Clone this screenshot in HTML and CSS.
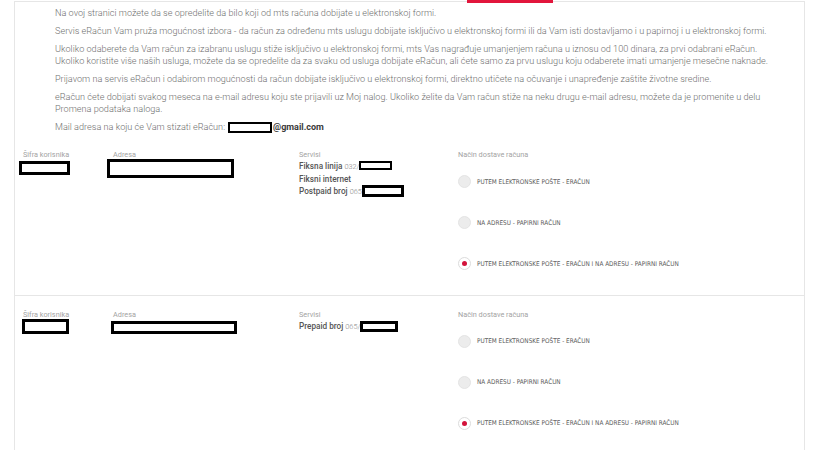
FILE: index.html
```html
<!DOCTYPE html>
<html lang="sr">
<head>
<meta charset="utf-8">
<title>eRačun</title>
<link rel="stylesheet" href="styles.css">
</head>
<body>
<div class="panel">
  <div class="tab-indicator"></div>
  <div class="intro">
    <p>Na ovoj stranici možete da se opredelite da bilo koji od mts računa dobijate u elektronskoj formi.</p>
    <p>Servis eRačun Vam pruža mogućnost izbora - da račun za određenu mts uslugu dobijate isključivo u elektronskoj formi ili da Vam isti dostavljamo i u papirnoj i u elektronskoj formi.</p>
    <p>Ukoliko odaberete da Vam račun za izabranu uslugu stiže isključivo u elektronskoj formi, mts Vas nagrađuje umanjenjem računa u iznosu od 100 dinara, za prvi odabrani eRačun.<br>Ukoliko koristite više naših usluga, možete da se opredelite da za svaku od usluga dobijate eRačun, ali ćete samo za prvu uslugu koju odaberete imati umanjenje mesečne naknade.</p>
    <p>Prijavom na servis eRačun i odabirom mogućnosti da račun dobijate isključivo u elektronskoj formi, direktno utičete na očuvanje i unapređenje zaštite životne sredine.</p>
    <p>eRačun ćete dobijati svakog meseca na e-mail adresu koju ste prijavili uz Moj nalog. Ukoliko želite da Vam račun stiže na neku drugu e-mail adresu, možete da je promenite u delu<br>Promena podataka naloga.</p>
    <p class="mail">Mail adresa na koju će Vam stizati eRačun:<span class="redact r-mail"></span><b>@gmail.com</b></p>
  </div>

  <div class="account">
    <div class="col">
      <div class="label">Šifra korisnika</div>
      <span class="redact r-id1"></span>
    </div>
    <div class="col">
      <div class="label">Adresa</div>
      <span class="redact r-addr1"></span>
    </div>
    <div class="col">
      <div class="label">Servisi</div>
      <div class="svc">Fiksna linija <small>032/</small><span class="redact r-s1"></span></div>
      <div class="svc">Fiksni internet</div>
      <div class="svc">Postpaid broj <small>065</small><span class="redact r-s2"></span></div>
    </div>
    <div class="col">
      <div class="label">Način dostave računa</div>
      <ul class="radios">
        <li><span class="radio"></span>PUTEM ELEKTRONSKE POŠTE - ERAČUN</li>
        <li><span class="radio"></span>NA ADRESU - PAPIRNI RAČUN</li>
        <li><span class="radio checked"></span>PUTEM ELEKTRONSKE POŠTE - ERAČUN I NA ADRESU - PAPIRNI RAČUN</li>
      </ul>
    </div>
  </div>

  <div class="account">
    <div class="col">
      <div class="label">Šifra korisnika</div>
      <span class="redact r-id2"></span>
    </div>
    <div class="col">
      <div class="label">Adresa</div>
      <span class="redact r-addr2"></span>
    </div>
    <div class="col">
      <div class="label">Servisi</div>
      <div class="svc">Prepaid broj <small>065/</small><span class="redact r-s3"></span></div>
    </div>
    <div class="col">
      <div class="label">Način dostave računa</div>
      <ul class="radios">
        <li><span class="radio"></span>PUTEM ELEKTRONSKE POŠTE - ERAČUN</li>
        <li><span class="radio"></span>NA ADRESU - PAPIRNI RAČUN</li>
        <li><span class="radio checked"></span>PUTEM ELEKTRONSKE POŠTE - ERAČUN I NA ADRESU - PAPIRNI RAČUN</li>
      </ul>
    </div>
  </div>
</div>
</body>
</html>
```

FILE: styles.css
```css
html, body {
  margin: 0;
  padding: 0;
  background: #fff;
}
body {
  font-family: Roboto, "Liberation Sans", sans-serif;
  padding-top: 1px;
}
.panel {
  position: relative;
  margin-left: 14px;
  width: 791px;
  box-sizing: border-box;
  border: 1px solid #e6e6e6;
  border-bottom: none;
  min-height: 460px;
}
.tab-indicator {
  position: absolute;
  top: -2px;
  left: 452px;
  width: 86px;
  height: 3px;
  background: #e2163c;
}
.intro {
  padding: 5px 20px 3px 40px;
  font-size: 9.15px;
  font-weight: 300;
  line-height: 12px;
  color: #6f6f6f;
}
.intro p {
  margin: 0 0 6px;
}
.intro p.mail {
  margin: 0;
}
.mail b {
  font-weight: 700;
  font-size: 9px;
  color: #3a3a3a;
}
.redact {
  display: inline-block;
  box-sizing: border-box;
  border: 3px solid #000;
  background: #fff;
}
.r-mail { width: 44px; height: 11px; vertical-align: -3px; margin-left: 3px; margin-right: 1px; border-width: 2px; }
.r-id1 { width: 51px; height: 14px; margin: 1px 0 0 -4px; }
.r-addr1 { width: 127px; height: 19px; margin: -1px 0 0 -6px; }
.r-s1 { width: 33px; height: 9px; vertical-align: -1px; border-width: 2px; }
.r-s2 { width: 42px; height: 12px; vertical-align: -3px; }
.r-id2 { width: 47px; height: 15px; margin: -1px 0 0 -1px; }
.r-addr2 { width: 126px; height: 13px; margin: 1px 0 0 -2px; }
.r-s3 { width: 38px; height: 11px; vertical-align: -3px; }

.account {
  display: grid;
  grid-template-columns: 90px 186px 159px 1fr;
  padding: 14px 0 10.5px 8px;
  border-bottom: 1px solid #e6e6e6;
}
.col {
  display: flex;
  flex-direction: column;
  align-items: flex-start;
}
.label {
  font-size: 7.3px;
  line-height: 10px;
  color: #a3a3a3;
  font-weight: 400;
}
.svc {
  font-family: Roboto, "Liberation Sans", sans-serif;
  font-size: 8.2px;
  line-height: 12px;
  font-weight: 500;
  color: #555;
  white-space: nowrap;
}
.svc small {
  font-family: Roboto, sans-serif;
  font-weight: 300;
  font-size: 7.3px;
  color: #8a8a8a;
}
.radios {
  list-style: none;
  margin: 1px 0 0;
  padding: 0;
}
.radios li {
  display: flex;
  align-items: center;
  height: 41px;
  font-family: "DejaVu Sans Condensed", "Roboto Condensed", Roboto, sans-serif;
  font-stretch: condensed;
  font-size: 6.4px;
  color: #5a5a5a;
  white-space: nowrap;
}
.radio {
  box-sizing: border-box;
  width: 13px;
  height: 13px;
  margin-right: 6px;
  border-radius: 50%;
  border: 1px solid #e4e4e4;
  background: #ececec;
  display: flex;
  align-items: center;
  justify-content: center;
  flex: none;
}
.radio.checked {
  background: #fff;
  border-color: #dcdcdc;
}
.radio.checked::after {
  content: "";
  width: 5px;
  height: 5px;
  border-radius: 50%;
  background: #d3133b;
}
```
